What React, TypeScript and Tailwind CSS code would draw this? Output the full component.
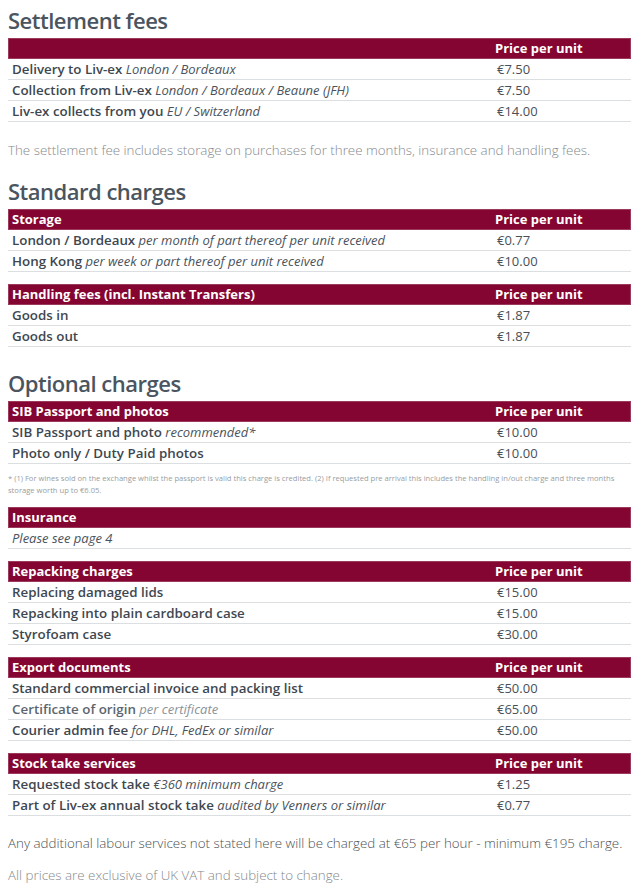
import React from 'react';

type Row = { label: string; note?: string; price?: string; muted?: boolean; italicOnly?: boolean };

type Table = { title: string; priceHeader?: boolean; rows: Row[]; className?: string };

function PriceTable({ title, priceHeader = true, rows, className = '' }: Table) {
  return (
    <div className={`text-[13px] ${className}`}>
      <div className="grid grid-cols-[1fr_138px] h-[21px] items-center bg-[#840532] border border-[#9b3a5b] text-white font-bold text-[13px]">
        <div className="pl-[3px] leading-[19px]">{title}</div>
        <div className="pl-[3px] leading-[19px]">{priceHeader ? 'Price per unit' : ''}</div>
      </div>
      {rows.map((row, i) => (
        <div key={i} className="grid grid-cols-[1fr_138px] h-[21px] items-center border-b border-[#dcdfe2]">
          <div className="pl-[4px] leading-[20px] whitespace-nowrap">
            {row.italicOnly ? (
              <span className="italic text-[#4a535c]">{row.label}</span>
            ) : (
              <>
                <span className={`font-semibold text-[13.35px] ${row.muted ? 'text-[#5c656e]' : 'text-[#3e4750]'}`}>{row.label}</span>
                {row.note && (
                  <span className={`italic ${row.muted ? 'text-[#8b9299]' : 'text-[#4a535c]'}`}> {row.note}</span>
                )}
              </>
            )}
          </div>
          <div className="pl-[4px] leading-[20px] text-[#4a4f55]">{row.price}</div>
        </div>
      ))}
    </div>
  );
}

function Heading({ children, className = '' }: { children: React.ReactNode; className?: string }) {
  return (
    <h2 className={`h-[30px] leading-[30px] text-[22px] font-semibold text-[#4a5560] tracking-[-0.5px] ${className}`}>
      {children}
    </h2>
  );
}

export default function App() {
  return (
    <div className="min-h-screen bg-white" style={{ fontFamily: '"Open Sans", "Liberation Sans", sans-serif' }}>
      <div className="w-[640px] px-2 pr-[9px] pt-[5px] pb-4">
        {/* Settlement fees */}
        <Heading className="mb-[3px]">Settlement fees</Heading>
        <PriceTable
          title=""
          rows={[
            { label: 'Delivery to Liv-ex', note: 'London / Bordeaux', price: '€7.50' },
            { label: 'Collection from Liv-ex', note: 'London / Bordeaux / Beaune (JFH)', price: '€7.50' },
            { label: 'Liv-ex collects from you', note: 'EU / Switzerland', price: '€14.00' },
          ]}
        />
        <p className="mt-[18px] leading-[20px] text-[13.35px] font-light text-[#85898d]">
          The settlement fee includes storage on purchases for three months, insurance and handling fees.
        </p>

        {/* Standard charges */}
        <Heading className="mt-[16px] mb-[3px]">Standard charges</Heading>
        <PriceTable
          title="Storage"
          rows={[
            { label: 'London / Bordeaux', note: 'per month of part thereof per unit received', price: '€0.77' },
            { label: 'Hong Kong', note: 'per week or part thereof per unit received', price: '€10.00' },
          ]}
        />
        <PriceTable
          className="mt-[12px]"
          title="Handling fees (incl. Instant Transfers)"
          rows={[
            { label: 'Goods in', price: '€1.87' },
            { label: 'Goods out', price: '€1.87' },
          ]}
        />

        {/* Optional charges */}
        <Heading className="mt-[21px] mb-[3px]">Optional charges</Heading>
        <PriceTable
          title="SIB Passport and photos"
          rows={[
            { label: 'SIB Passport and photo', note: 'recommended*', price: '€10.00' },
            { label: 'Photo only / Duty Paid photos', price: '€10.00' },
          ]}
        />
        <p className="mt-[8px] text-[7.6px] leading-[12px] text-[#999da1]">
          * (1) For wines sold on the exchange whilst the passport is valid this charge is credited. (2) If requested pre arrival this includes the handling in/out charge and three months storage worth up to €6.05.
        </p>
        <PriceTable
          className="mt-[11px]"
          title="Insurance"
          priceHeader={false}
          rows={[{ label: 'Please see page 4', italicOnly: true }]}
        />
        <PriceTable
          className="mt-[12px]"
          title="Repacking charges"
          rows={[
            { label: 'Replacing damaged lids', price: '€15.00' },
            { label: 'Repacking into plain cardboard case', price: '€15.00' },
            { label: 'Styrofoam case', price: '€30.00' },
          ]}
        />
        <PriceTable
          className="mt-[12px]"
          title="Export documents"
          rows={[
            { label: 'Standard commercial invoice and packing list', price: '€50.00' },
            { label: 'Certificate of origin', note: 'per certificate', price: '€65.00', muted: true },
            { label: 'Courier admin fee', note: 'for DHL, FedEx or similar', price: '€50.00' },
          ]}
        />
        <PriceTable
          className="mt-[12px]"
          title="Stock take services"
          rows={[
            { label: 'Requested stock take', note: '€360 minimum charge', price: '€1.25' },
            { label: 'Part of Liv-ex annual stock take', note: 'audited by Venners or similar', price: '€0.77' },
          ]}
        />

        <p className="mt-[17px] leading-[20px] text-[13.35px] font-light text-[#4c5053]">
          Any additional labour services not stated here will be charged at €65 per hour - minimum €195 charge.
        </p>
        <p className="mt-[12px] leading-[20px] text-[13.35px] font-light text-[#85898d]">
          All prices are exclusive of UK VAT and subject to change.
        </p>
      </div>
    </div>
  );
}
